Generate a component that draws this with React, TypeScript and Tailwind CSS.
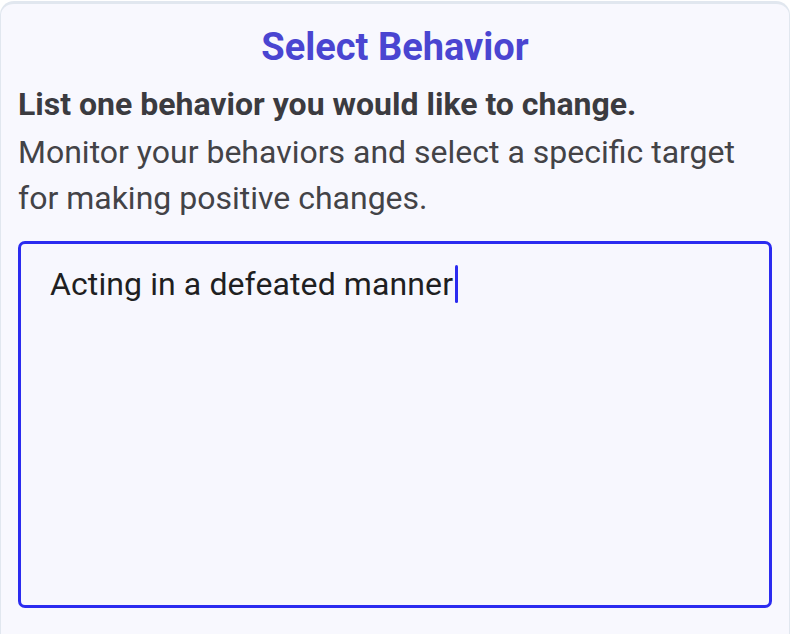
export default function App() {
  return (
    <div className="min-h-screen bg-white pt-px" style={{ fontFamily: 'Roboto, "Noto Sans", sans-serif' }}>
      <div className="h-[660px] rounded-t-[14px] border-x border-t-[3px] border-[#e1e7ef] bg-[#f8f8fe] px-[17px] pt-[15px]">
        <h1 className="text-center text-[38px] font-bold leading-[56px] text-[#4a45d1]">Select Behavior</h1>
        <p className="mt-[7px] text-[32px] font-bold leading-[44px] text-[#3b3b40]">List one behavior you would like to change.</p>
        <p className="mt-[3px] text-[32px] leading-[46px] text-[#434347]">
          Monitor your behaviors and select a specific target for making positive changes.
        </p>
        <div className="mt-[20px] h-[367px] rounded-[7px] border-[3px] border-[#2b2bf0] bg-[#f7f7fe] px-[29px] pt-[21px]">
          <div className="flex items-center text-[32px] leading-[38px] text-[#1f1f22]">
            <span className="tracking-[0.1px]">Acting in a defeated manner</span>
            <span className="ml-[2px] h-[38px] w-[3px] rounded-sm bg-[#2b2bf0]" />
          </div>
        </div>
      </div>
    </div>
  );
}
